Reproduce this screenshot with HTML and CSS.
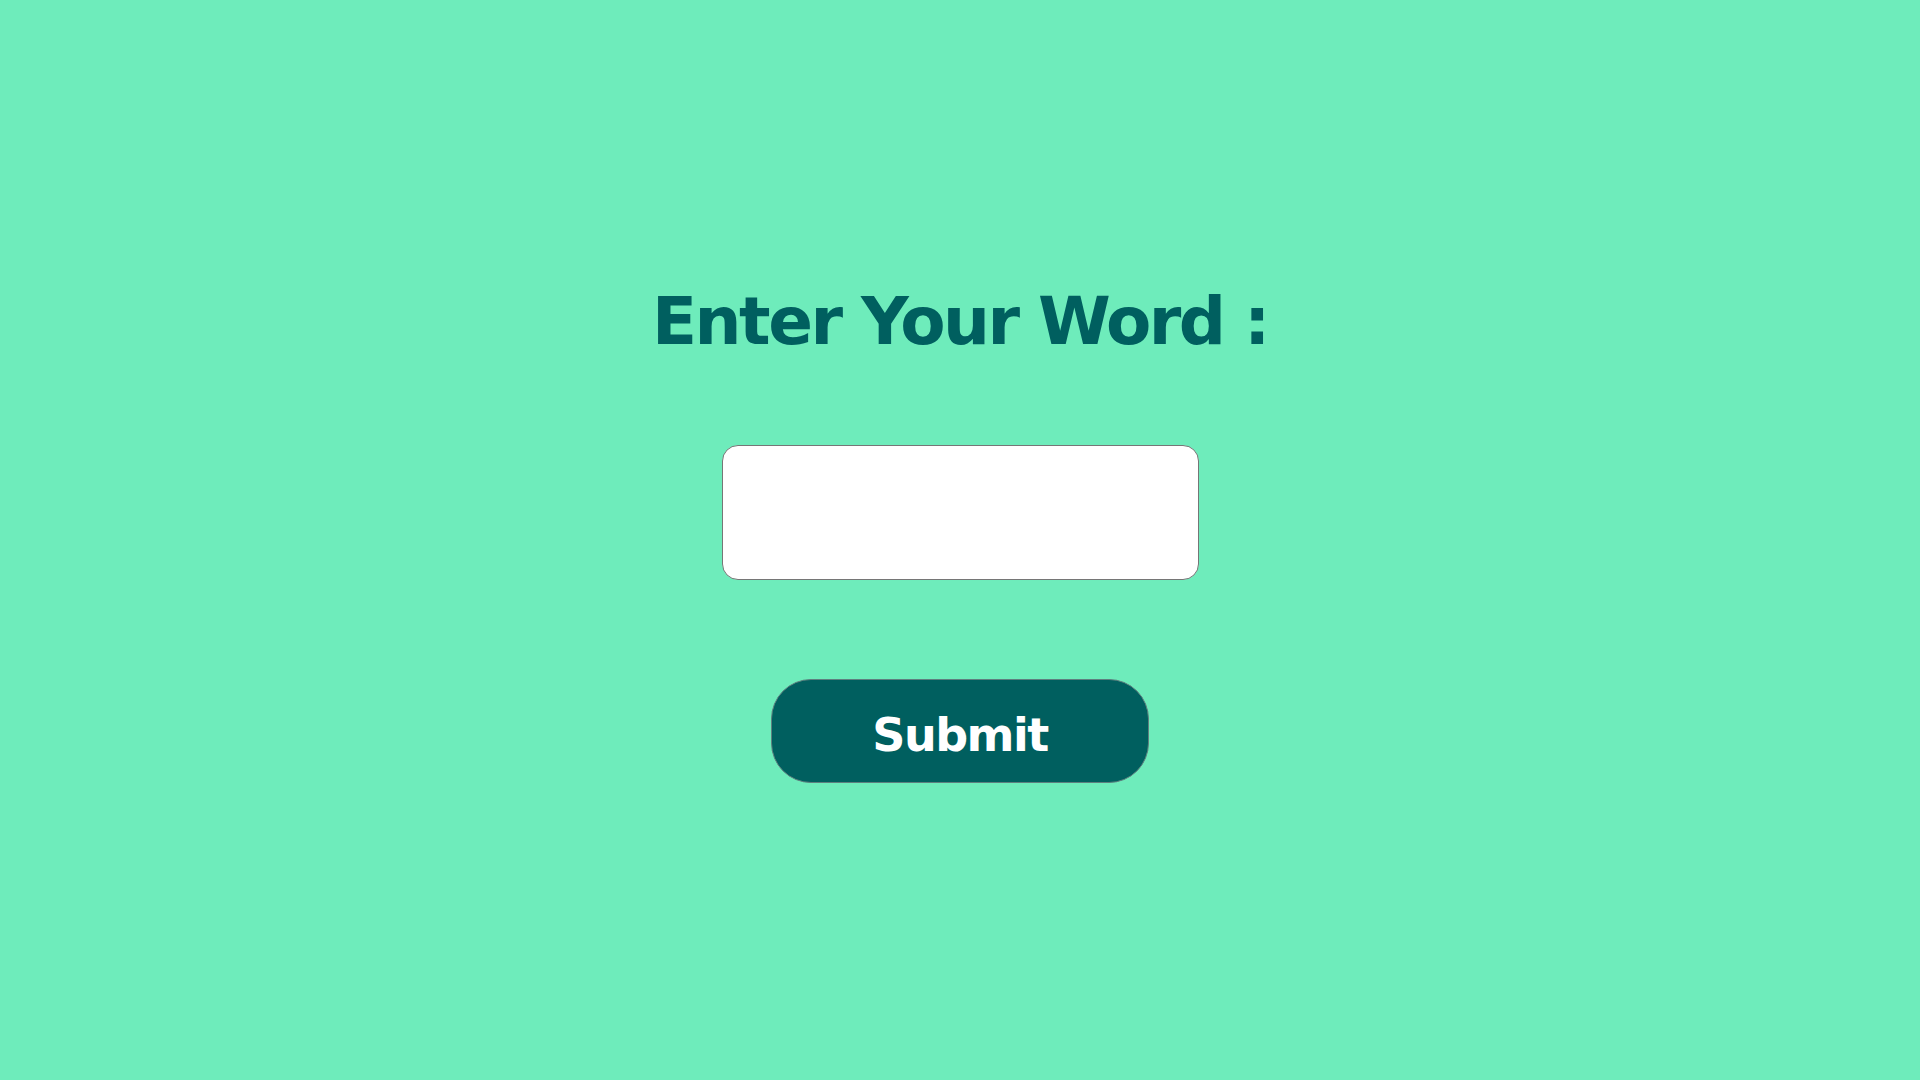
FILE: index.html
```html
<!DOCTYPE html>
<html lang="en">
<head>
<meta charset="utf-8">
<title>Enter Your Word</title>
<link rel="stylesheet" href="styles.css">
</head>
<body>
<main class="page">
  <h1 class="title">Enter Your Word :</h1>
  <input class="word-input" type="text" aria-label="Your word">
  <button class="submit-btn" type="button">Submit</button>
</main>
</body>
</html>
```
FILE: styles.css
```css
html, body {
  margin: 0;
  padding: 0;
  height: 100%;
}

body {
  background: #6eecbb;
  font-family: "DejaVu Sans", "Noto Sans", sans-serif;
}

.page {
  display: flex;
  flex-direction: column;
  align-items: center;
  padding-top: 289px;
  box-sizing: border-box;
  min-height: 100%;
}

.title {
  margin: 0;
  font-size: 66px;
  line-height: 66px;
  font-weight: 700;
  letter-spacing: -2.5px;
  color: #005f5f;
  white-space: pre;
}

.word-input {
  margin-top: 90px;
  width: 477px;
  height: 135px;
  box-sizing: border-box;
  border: 1px solid #767676;
  border-radius: 16px;
  background: #ffffff;
  outline: none;
  font-family: inherit;
  font-size: 24px;
}

.submit-btn {
  margin-top: 99px;
  width: 378px;
  height: 104px;
  box-sizing: border-box;
  border: 1px solid #5e7f7f;
  border-radius: 40px;
  background: #005f5f;
  color: #ffffff;
  font-family: inherit;
  font-size: 46px;
  font-weight: 700;
  letter-spacing: -1.5px;
  padding: 8px 0 0;
  display: flex;
  align-items: center;
  justify-content: center;
  cursor: pointer;
}
```
